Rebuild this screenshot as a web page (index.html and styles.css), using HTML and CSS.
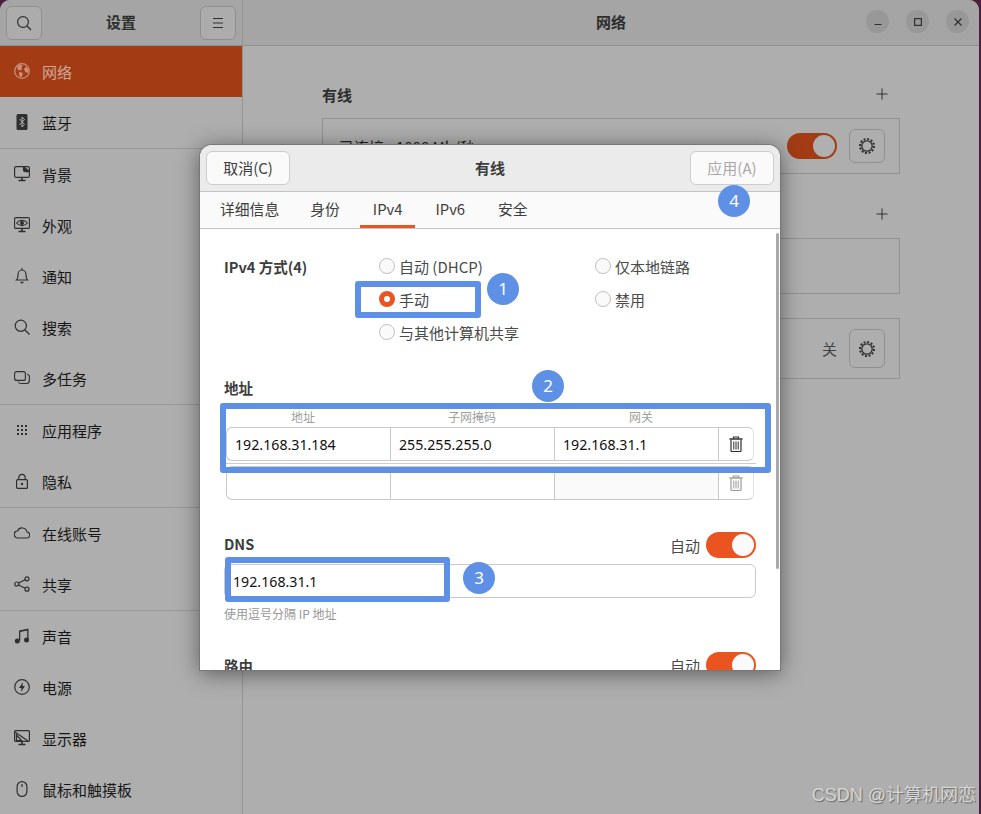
FILE: index.html
```html
<!DOCTYPE html>
<html lang="zh-CN">
<head>
    <meta charset="UTF-8">
    <title>设置 - 网络</title>
    <link rel="stylesheet" href="styles.css">
</head>
<body>
    <div class="window">
        <aside class="sidebar">
            <header class="side-head">
                <button class="head-btn">
                    <svg width="16" height="16" viewBox="0 0 16 16" fill="none" stroke="#2f2f2f" stroke-width="1.2"><circle cx="7" cy="7" r="5.4"/><path d="M11 11l4 4"/></svg>
                </button>
                <span class="head-title">设置</span>
                <button class="head-btn">
                    <svg width="16" height="16" viewBox="0 0 16 16" fill="none" stroke="#2f2f2f" stroke-width="1.2"><path d="M3 3.5h10M3 8h10M3 12.5h10"/></svg>
                </button>
            </header>
            <nav class="side-list">
                <a class="side-item selected">
                    <svg class="side-icon" viewBox="0 0 16 16"><circle cx="8" cy="8" r="7.300" fill="none" stroke="#c98f78" stroke-width="1.300"/><path d="M3 4l3-2.500 2.500.5L7.500 4.500 8 6 6.500 7.500 4 7zM5 9l3 .5 1 1.500-1.500 3L6 14 5 11.500zM10 6l2-2.500 2 2.500.5 3-1.500 1-2-1.500z" fill="#c98f78"/></svg>
                    网络
                </a>
                <a class="side-item">
                    <svg class="side-icon" viewBox="0 0 16 16"><rect x="2.500" y="0" width="11" height="16" rx="1.500" fill="#2f2f2f"/><path d="M5.500 5l5 5.500L8 13V3l2.500 2.500-5 5.500" fill="none" stroke="#b0b0b0"/></svg>
                    蓝牙
                </a>
                <div class="side-sep"></div>
                <a class="side-item">
                    <svg class="side-icon" viewBox="0 0 16 16" fill="none" stroke="#2f2f2f" stroke-width="1.200"><rect x=".6" y=".6" width="14.800" height="10.800" rx="1.500"/><path d="M9.500 .6v3.500a1.500 1.500 0 0 0 1.500 1.500h4.400z" fill="#2f2f2f"/><path d="M4.500 14.500h7M8 11.500v3" stroke-width="1.600"/></svg>
                    背景
                </a>
                <a class="side-item">
                    <svg class="side-icon" viewBox="0 0 16 16" fill="none" stroke="#2f2f2f" stroke-width="1.100"><rect x=".6" y=".6" width="14.800" height="10.800" rx="1"/><path d="M2.500 6c3-3.500 8-3.500 11 0-3 3.500-8 3.500-11 0z"/><circle cx="8" cy="6" r="1.400" fill="#2f2f2f"/><path d="M4.500 14.500h7M8 11.500v3" stroke-width="1.600"/></svg>
                    外观
                </a>
                <a class="side-item">
                    <svg class="side-icon" viewBox="0 0 16 16" fill="none" stroke="#2f2f2f" stroke-width="1.200"><path d="M2.500 12c1.500-1.500 1.500-3 1.500-5.500C4 4 5.800 2 8 2s4 2 4 4.500c0 2.500 0 4 1.500 5.500z"/><path d="M6.500 14.500h3" stroke-width="1.500"/><path d="M8 0v2"/></svg>
                    通知
                </a>
                <a class="side-item">
                    <svg class="side-icon" viewBox="0 0 16 16" fill="none" stroke="#2f2f2f" stroke-width="1.200"><circle cx="6.800" cy="6.800" r="5.600"/><path d="M11 11l4.500 4.500"/></svg>
                    搜索
                </a>
                <a class="side-item">
                    <svg class="side-icon" viewBox="0 0 16 16" fill="none" stroke="#2f2f2f" stroke-width="1.100"><rect x=".6" y="1.600" width="10.800" height="8.800" rx="2"/><path d="M13 4.500c1.500 0 2.400.7 2.400 2v4c0 2-1 3-3 3H7c-1.500 0-2.500-.7-2.800-2"/></svg>
                    多任务
                </a>
                <div class="side-sep"></div>
                <a class="side-item">
                    <svg class="side-icon" viewBox="0 0 16 16" fill="#2f2f2f"><rect x="3" y="3" width="2" height="2"/><rect x="7" y="3" width="2" height="2"/><rect x="11" y="3" width="2" height="2"/><rect x="3" y="7" width="2" height="2"/><rect x="7" y="7" width="2" height="2"/><rect x="11" y="7" width="2" height="2"/><rect x="3" y="11" width="2" height="2"/><rect x="7" y="11" width="2" height="2"/><rect x="11" y="11" width="2" height="2"/></svg>
                    应用程序
                </a>
                <a class="side-item">
                    <svg class="side-icon" viewBox="0 0 16 16" fill="none" stroke="#2f2f2f" stroke-width="1.200"><rect x="2.600" y="6.600" width="10.800" height="8.800" rx="1"/><path d="M4.800 6.500V4.500a3.200 3.200 0 0 1 6.400 0v2"/><circle cx="8" cy="11" r="1.200" fill="#2f2f2f" stroke="none"/></svg>
                    隐私
                </a>
                <div class="side-sep"></div>
                <a class="side-item">
                    <svg class="side-icon" viewBox="0 0 16 16" fill="none" stroke="#2f2f2f" stroke-width="1.200"><path d="M4 13h8.500a3 3 0 0 0 .5-6 5 5 0 0 0-9.500-1A3.500 3.500 0 0 0 4 13z"/></svg>
                    在线账号
                </a>
                <a class="side-item">
                    <svg class="side-icon" viewBox="0 0 16 16" fill="none" stroke="#2f2f2f" stroke-width="1.200"><circle cx="2.800" cy="8" r="2"/><circle cx="13" cy="2.800" r="2"/><circle cx="13" cy="13.200" r="2"/><path d="M4.600 7l6.600-3.300M4.600 9l6.600 3.300"/></svg>
                    共享
                </a>
                <div class="side-sep"></div>
                <a class="side-item">
                    <svg class="side-icon" viewBox="0 0 16 16" fill="#2f2f2f"><path d="M5 2.500L14.500.5v1.800L6.300 4v8.500H5zM13.200 2h1.300v9.500h-1.300z"/><circle cx="3.300" cy="13" r="2.500"/><circle cx="12.500" cy="12" r="2.500"/></svg>
                    声音
                </a>
                <a class="side-item">
                    <svg class="side-icon" viewBox="0 0 16 16"><circle cx="8" cy="8" r="7.300" fill="none" stroke="#2f2f2f" stroke-width="1.200"/><path d="M9 3L5 9h2.500L7 13l4-6H8.500z" fill="#2f2f2f"/></svg>
                    电源
                </a>
                <a class="side-item">
                    <svg class="side-icon" viewBox="0 0 16 16" fill="none" stroke="#2f2f2f" stroke-width="1.200"><rect x=".6" y=".6" width="14.800" height="10.800" rx="1"/><path d="M1 2l13 9M2.500 5l5 5.500h-5z"/><path d="M4.500 14.500h7M8 11.500v3" stroke-width="1.600"/></svg>
                    显示器
                </a>
                <a class="side-item">
                    <svg class="side-icon" viewBox="0 0 16 16" fill="none" stroke="#2f2f2f" stroke-width="1.200"><rect x="3.100" y=".6" width="9.800" height="14.800" rx="4.900"/><path d="M8 3v3"/></svg>
                    鼠标和触摸板
                </a>
            </nav>
        </aside>
        <main class="main">
            <header class="main-head">
                <span class="main-title">网络</span>
                <div class="win-btns">
                    <span class="win-btn"><svg width="12" height="12" viewBox="0 0 12 12" stroke="#2f2f2f" stroke-width="1.200"><path d="M2.500 8.500h7"/></svg></span>
                    <span class="win-btn"><svg width="12" height="12" viewBox="0 0 12 12" fill="none" stroke="#2f2f2f" stroke-width="1.200"><rect x="2.600" y="2.600" width="6.800" height="6.800"/></svg></span>
                    <span class="win-btn"><svg width="12" height="12" viewBox="0 0 12 12" stroke="#2f2f2f" stroke-width="1.200"><path d="M2.500 2.500l7 7M9.500 2.500l-7 7"/></svg></span>
                </div>
            </header>
            <div class="main-body">
                <div class="group-head">
                    <span class="group-title">有线</span>
                    <svg width="12" height="12" viewBox="0 0 12 12" stroke="#2f2f2f" stroke-width="1"><path d="M.5 6h11M6 .5v11"/></svg>
                </div>
                <div class="card card-wired">
                    <span class="card-label">已连接 - 1000 Mb/秒</span>
                    <span class="toggle toggle-dim"><i></i></span>
                    <span class="gear-btn">
                        <svg width="18" height="18" viewBox="0 0 18 18" fill="none" stroke="#2f2f2f"><circle cx="9" cy="9" r="5.200" stroke-width="1.300"/><circle cx="9" cy="9" r="7" stroke-width="2" stroke-dasharray="2 1.660"/></svg>
                    </span>
                </div>
                <div class="group-head group-vpn">
                    <svg width="12" height="12" viewBox="0 0 12 12" stroke="#2f2f2f" stroke-width="1"><path d="M.5 6h11M6 .5v11"/></svg>
                </div>
                <div class="card card-vpn"></div>
                <div class="card card-proxy">
                    <span class="card-state">关</span>
                    <span class="gear-btn">
                        <svg width="18" height="18" viewBox="0 0 18 18" fill="none" stroke="#2f2f2f"><circle cx="9" cy="9" r="5.200" stroke-width="1.300"/><circle cx="9" cy="9" r="7" stroke-width="2" stroke-dasharray="2 1.660"/></svg>
                    </span>
                </div>
            </div>
        </main>
    </div>

    <section class="dialog">
        <header class="dlg-head">
            <button class="dlg-btn">取消(C)</button>
            <span class="dlg-title">有线</span>
            <button class="dlg-btn dlg-btn-off">应用(A)</button>
        </header>
        <div class="tabs">
            <span class="tab">详细信息</span>
            <span class="tab">身份</span>
            <span class="tab active">IPv4</span>
            <span class="tab">IPv6</span>
            <span class="tab">安全</span>
        </div>
        <div class="dlg-body">
            <div class="method">
                <span class="section-title method-title">IPv4 方式(4)</span>
                <div class="radio-col">
                    <label class="radio-row"><i class="radio"></i>自动 (DHCP)</label>
                    <label class="radio-row"><i class="radio on"></i>手动</label>
                    <label class="radio-row"><i class="radio"></i>与其他计算机共享</label>
                </div>
                <div class="radio-col">
                    <label class="radio-row"><i class="radio"></i>仅本地链路</label>
                    <label class="radio-row"><i class="radio"></i>禁用</label>
                </div>
            </div>

            <div class="section-title addr-title">地址</div>
            <div class="addr-labels">
                <span>地址</span><span>子网掩码</span><span>网关</span>
            </div>
            <div class="addr-row">
                <span class="addr-cell">192.168.31.184</span>
                <span class="addr-cell">255.255.255.0</span>
                <span class="addr-cell">192.168.31.1</span>
                <span class="addr-del">
                    <svg width="14" height="16" viewBox="0 0 14 16" fill="none" stroke="#2f2f2f"><path d="M.5 3h13" stroke-width="1.500"/><path d="M4.500 2.500V1h5v1.500" stroke-width="1.200"/><path d="M2 4v10.500a1 1 0 0 0 1 1h8a1 1 0 0 0 1-1V4" stroke-width="1.200"/><path d="M4.800 5.500v8M7 5.500v8M9.200 5.500v8" stroke-width="1"/></svg>
                </span>
            </div>
            <div class="addr-line"></div>
            <div class="addr-row">
                <span class="addr-cell"></span>
                <span class="addr-cell"></span>
                <span class="addr-cell addr-cell-off"></span>
                <span class="addr-del">
                    <svg width="14" height="16" viewBox="0 0 14 16" fill="none" stroke="#9a9a9a"><path d="M.5 3h13" stroke-width="1.500"/><path d="M4.500 2.500V1h5v1.500" stroke-width="1.200"/><path d="M2 4v10.500a1 1 0 0 0 1 1h8a1 1 0 0 0 1-1V4" stroke-width="1.200"/><path d="M4.800 5.500v8M7 5.500v8M9.200 5.500v8" stroke-width="1"/></svg>
                </span>
            </div>

            <div class="switch-head dns-head">
                <span class="section-title">DNS</span>
                <span class="auto">自动<span class="toggle"><i></i></span></span>
            </div>
            <div class="dns-input">192.168.31.1</div>
            <div class="hint">使用逗号分隔 IP 地址</div>

            <div class="switch-head route-head">
                <span class="section-title">路由</span>
                <span class="auto">自动<span class="toggle"><i></i></span></span>
            </div>
            <span class="scrollbar"></span>
        </div>
    </section>

    <!-- 标注 -->
    <div class="mark mark-1"></div>
    <div class="mark mark-2"></div>
    <div class="mark mark-3"></div>
    <span class="num num-1">1</span>
    <span class="num num-2">2</span>
    <span class="num num-3">3</span>
    <span class="num num-4">4</span>

    <div class="watermark">CSDN @计算机网恋</div>
</body>
</html>
```

FILE: styles.css
```css
* {
    box-sizing: border-box;
}

html, body {
    height: 100%;
}

body {
    margin: 0;
    width: 981px;
    height: 814px;
    overflow: hidden;
    position: relative;
    background-color: #4b1f3f;
    font-family: "Noto Sans CJK SC", "Noto Sans", sans-serif;
    font-size: 15px;
    color: #2e2e2e;
}

/* 背后的设置窗口 */
.window {
    display: flex;
    width: 979px;
    height: 814px;
    background-color: #aeaeae;
    border-radius: 10px 10px 0 0;
    overflow: hidden;
}

.sidebar {
    width: 243px;
    flex-shrink: 0;
    border-right: 1px solid #949494;
}

.side-head, .main-head {
    height: 46px;
    display: flex;
    align-items: center;
    background-color: #a5a5a5;
    border-bottom: 1px solid #909090;
}

.side-head {
    justify-content: space-between;
    padding: 0 6px;
}

.head-title, .main-title {
    margin-bottom: 2px;
    font-weight: 700;
    font-size: 15px;
    color: #2e2e2e;
}

.head-btn {
    width: 36px;
    height: 34px;
    padding: 0;
    display: flex;
    align-items: center;
    justify-content: center;
    background-color: #acacac;
    border: 1px solid #8f8f8f;
    border-radius: 6px;
}

.side-list {
    display: flex;
    flex-direction: column;
}

.side-item {
    height: 51px;
    display: flex;
    align-items: center;
    padding-left: 14px;
    gap: 12px;
    color: #161616;
    font-size: 15px;
}

.side-item.selected {
    background-color: #a33c15;
    color: #cfa797;
}

.side-icon {
    width: 16px;
    height: 16px;
    flex-shrink: 0;
    margin-bottom: 2px;
}

.side-sep {
    height: 1px;
    background-color: #999999;
}

.main {
    flex: 1;
    display: flex;
    flex-direction: column;
}

.main-head {
    position: relative;
    justify-content: center;
}

.win-btns {
    position: absolute;
    right: 10px;
    top: 10px;
    display: flex;
    gap: 17px;
}

.win-btn {
    width: 23px;
    height: 23px;
    border-radius: 50%;
    display: flex;
    align-items: center;
    justify-content: center;
    background-color: #989898;
}

.main-body {
    width: 578px;
    margin-left: 79px;
    padding-top: 38px;
}

.group-head {
    height: 20px;
    display: flex;
    justify-content: space-between;
    align-items: center;
    padding-right: 12px;
    margin-bottom: 14px;
}

.group-title {
    font-weight: 700;
    font-size: 15px;
    color: #2e2e2e;
}

.group-vpn {
    justify-content: flex-end;
    margin-top: 30px;
}

.card {
    border: 1px solid #929292;
    display: flex;
    align-items: center;
    padding: 0 16px;
}

.card-wired {
    height: 56px;
}

.card-vpn {
    height: 56px;
    margin-bottom: 24px;
}

.card-proxy {
    height: 61px;
}

.card-label {
    flex: 1;
    color: #222222;
}

.card-state {
    margin-left: auto;
    margin-right: 12px;
    color: #444444;
}

.gear-btn {
    width: 36px;
    height: 34px;
    margin-right: -2px;
    display: flex;
    align-items: center;
    justify-content: center;
    border: 1px solid #8f8f8f;
    border-radius: 6px;
}

.card-wired .toggle {
    margin-right: 12px;
}

.card-proxy .gear-btn {
    height: 39px;
}

/* 开关 */
.toggle {
    display: inline-flex;
    justify-content: flex-end;
    align-items: center;
    width: 50px;
    height: 26px;
    padding: 2px;
    border-radius: 13px;
    background-color: #e95420;
}

.toggle i {
    width: 22px;
    height: 22px;
    border-radius: 50%;
    background-color: #fafafa;
}

.toggle-dim {
    background-color: #a33c15;
}

.toggle-dim i {
    background-color: #b0b0b0;
}

/* 对话框 */
.dialog {
    position: absolute;
    left: 200px;
    top: 145px;
    width: 580px;
    height: 525px;
    background-color: #ffffff;
    border-radius: 12px 12px 0 0;
    box-shadow: 0 0 0 1px #777777, 0 3px 22px rgba(0, 0, 0, 0.5);
    display: flex;
    flex-direction: column;
    overflow: hidden;
}

.dlg-head {
    height: 47px;
    flex-shrink: 0;
    display: flex;
    align-items: center;
    justify-content: space-between;
    padding: 0 6px;
    background-color: #ebebeb;
    border-bottom: 1px solid #c4c4c4;
}

.dlg-title {
    margin-bottom: 2px;
    font-weight: 700;
    font-size: 15px;
    color: #3d3d3d;
}

.dlg-btn {
    width: 84px;
    height: 34px;
    padding: 0 0 2px;
    background-color: #fafafa;
    border: 1px solid #cdcdcd;
    border-radius: 6px;
    font-family: inherit;
    font-size: 15px;
    color: #3d3d3d;
}

.dlg-btn-off {
    color: #a8a8a8;
}

.tabs {
    height: 37px;
    flex-shrink: 0;
    display: flex;
    gap: 7px;
    padding-left: 7px;
    background-color: #fafafa;
    border-bottom: 1px solid #c4c4c4;
}

.tab {
    height: 36px;
    padding: 0 13px;
    display: flex;
    align-items: center;
    font-size: 14.800px;
    color: #3d3d3d;
    border-bottom: 3px solid transparent;
}

.tab:first-child {
    margin-right: -2px;
}

.tab.active {
    border-bottom-color: #e95420;
}

.dlg-body {
    flex: 1;
    position: relative;
    padding: 0 24px;
    overflow: hidden;
}

.section-title {
    font-weight: 700;
    font-size: 14.500px;
    color: #3d3d3d;
}

.method {
    display: flex;
    padding-top: 21px;
    height: 141px;
}

.method-title {
    flex: none;
    width: 155px;
    margin-top: 2px;
    line-height: 30px;
}

.radio-col {
    flex: none;
    width: 216px;
}

.radio-row {
    display: flex;
    align-items: center;
    gap: 4px;
    height: 33px;
    font-size: 15px;
    color: #4a4a4a;
}

.radio {
    width: 16px;
    height: 16px;
    border: 1px solid #c0c0c0;
    border-radius: 50%;
    background-color: #fafafa;
    margin-bottom: 1px;
}

.radio.on {
    border: 5px solid #e95420;
    background-color: #ffffff;
}

.addr-title {
    line-height: 20px;
    margin-top: 8px;
}

.addr-labels {
    display: flex;
    margin: 12px 0 3px -5.500px;
    font-size: 12px;
    line-height: 14px;
    color: #a0a0a0;
}

.addr-labels span {
    width: 169px;
    text-align: center;
}

.addr-row {
    display: flex;
    width: 528px;
    height: 34px;
    margin-left: 2px;
    border: 1px solid #c9c9c9;
    border-right-color: #e3e3e3;
    border-radius: 6px;
}

.addr-line {
    width: 532px;
    height: 1px;
    margin: 2px 0;
    background-color: #cccccc;
}

.addr-cell {
    width: 164px;
    padding-left: 8px;
    line-height: 33px;
    font-family: "Noto Sans", sans-serif;
    font-size: 14.200px;
    color: #111111;
    border-right: 1px solid #c9c9c9;
}

.addr-cell-off {
    background-color: #fafafa;
}

.addr-del {
    flex: 1;
    display: flex;
    align-items: center;
    justify-content: center;
}

.switch-head {
    width: 532px;
    height: 26px;
    display: flex;
    align-items: center;
    justify-content: space-between;
}

.dns-head {
    margin-top: 32px;
}

.dns-head .section-title {
    margin-bottom: 3px;
}

.auto {
    display: flex;
    align-items: center;
    gap: 6px;
    font-size: 15px;
    color: #4a4a4a;
}

.dns-input {
    width: 532px;
    height: 34px;
    margin-top: 6px;
    padding-left: 8px;
    line-height: 33px;
    border: 1px solid #c9c9c9;
    border-radius: 6px;
    font-family: "Noto Sans", sans-serif;
    font-size: 14.200px;
    color: #111111;
}

.hint {
    margin-top: 8px;
    font-size: 12px;
    line-height: 16px;
    color: #979797;
}

.route-head {
    margin-top: 30px;
}

.scrollbar {
    position: absolute;
    right: 1px;
    top: 4px;
    width: 3px;
    height: 336px;
    border-radius: 2px;
    background-color: #a9a9a9;
}

/* 蓝色标注 */
.mark {
    position: absolute;
    border: 6px solid #5e91e6;
    border-radius: 3px;
}

.mark-1 {
    left: 355px;
    top: 281px;
    width: 126px;
    height: 37px;
}

.mark-2 {
    left: 220px;
    top: 403px;
    width: 551px;
    height: 70px;
}

.mark-3 {
    left: 225px;
    top: 557px;
    width: 225px;
    height: 45px;
}

.num {
    position: absolute;
    width: 32px;
    height: 32px;
    line-height: 32px;
    text-align: center;
    border-radius: 50%;
    background-color: #5e91e6;
    color: #ffffff;
    font-family: "Noto Sans", sans-serif;
    font-size: 17px;
}

.num-1 { left: 487px; top: 273px; }
.num-2 { left: 532px; top: 370px; }
.num-3 { left: 463px; top: 562px; }
.num-4 { left: 718px; top: 185px; }

.watermark {
    position: absolute;
    right: 5px;
    bottom: 8px;
    font-family: "Liberation Sans", "Noto Sans CJK SC", sans-serif;
    font-size: 18px;
    color: #d6d6d6;
    text-shadow: 1px 1px 1px rgba(0, 0, 0, 0.4);
}
```
